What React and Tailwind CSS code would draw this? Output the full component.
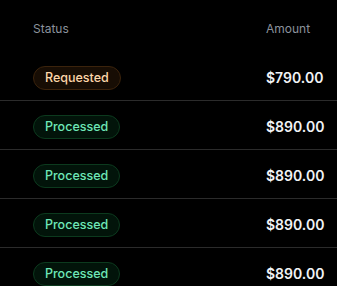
import React from 'react';

const rows = [
  { status: 'Requested', amount: '$790.00' },
  { status: 'Processed', amount: '$890.00' },
  { status: 'Processed', amount: '$890.00' },
  { status: 'Processed', amount: '$890.00' },
  { status: 'Processed', amount: '$890.00' },
];

const StatusBadge = ({ status }) => {
  if (status === 'Requested') {
    return (
      <span className="inline-flex items-center h-6 px-[11px] rounded-full border border-[#3b230c] bg-[#170d04] text-[12.5px] font-medium text-[#fed7aa]">
        {status}
      </span>
    );
  }
  return (
    <span className="inline-flex items-center h-6 px-[11px] rounded-full border border-[#0c3a1e] bg-[#02140a] text-[12.5px] font-medium text-[#6ee7b7]">
      {status}
    </span>
  );
};

const App = () => {
  return (
    <div
      className="w-[337px] h-[286px] overflow-hidden bg-black"
      style={{ fontFamily: 'Inter, "Noto Sans", sans-serif' }}
    >
      {/* header */}
      <div className="flex items-center h-[52px] pt-1.5 text-[12px] text-[#8b929c]">
        <div className="w-[266px] pl-[33px]">Status</div>
        <div>Amount</div>
      </div>

      {rows.map((row, i) => (
        <div key={i} className="flex items-center h-[49px] pt-0.5 border-b border-[#2b2b2b]">
          <div className="w-[266px] pl-[33px]">
            <StatusBadge status={row.status} />
          </div>
          <div className="text-[14px] font-semibold text-[#f1f3f5]">{row.amount}</div>
        </div>
      ))}
    </div>
  );
};

export default App;
